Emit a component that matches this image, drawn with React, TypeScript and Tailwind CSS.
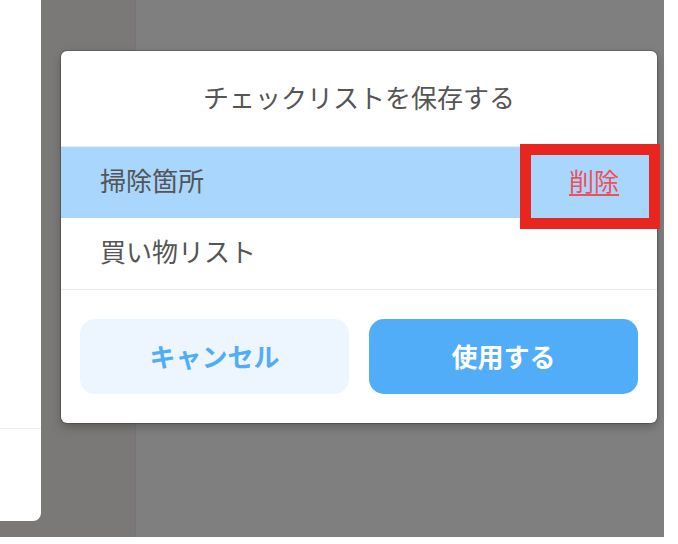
/**
 * Save-checklist dialog over a dimmed screen.
 */

interface ChecklistItem {
  id: number;
  name: string;
  selected: boolean;
}

const items: ChecklistItem[] = [
  { id: 1, name: '掃除箇所', selected: true },
  { id: 2, name: '買い物リスト', selected: false },
];

export default function App() {
  return (
    <div className="relative w-[678px] h-[544px] overflow-hidden bg-white font-['Noto_Sans_CJK_JP','Noto_Sans',sans-serif]">
      {/* Dimmed background screen */}
      <div className="flex w-[664px] h-[537px] bg-[#7f7f7f]">
        <div className="w-[41px] bg-[#7a7977]">
          <div className="flex flex-col h-[521px] bg-white rounded-br-[8px]">
            <div className="h-[428px]"></div>
            <div className="border-t border-[#ececec]"></div>
          </div>
        </div>
        <div className="w-[95px] bg-[#7a7977] border-r border-[#767676]"></div>
        <div className="flex-1"></div>
      </div>

      {/* Dialog */}
      <div className="absolute left-[61px] top-[51px] w-[596px] h-[372px] flex flex-col bg-white rounded-[6px] shadow-[0_0_0_1px_rgba(0,0,0,0.18),0_4px_10px_rgba(0,0,0,0.25)]">
        <div className="h-[96px] flex items-center justify-center pb-[4px] border-b border-[#ececec] text-[26px] leading-none text-[#555]">
          チェックリストを保存する
        </div>
        {items.map(item => (
          <div
            key={item.id}
            className={`h-[71px] flex items-center justify-between pl-[39px] pr-[38px] pb-[5px] text-[26px] leading-none text-[#555] ${item.selected ? 'bg-[#a9d6fc]' : 'bg-white'}`}
          >
            <span>{item.name}</span>
            {item.selected && (
              <span className="text-[25px] text-[#f0505a] underline underline-offset-[3px]">削除</span>
            )}
          </div>
        ))}
        <div className="flex-1 flex items-center gap-[20px] px-[19px] border-t border-[#ececec]">
          <button className="flex-1 h-[75px] pb-[3px] rounded-[15px] bg-[#edf6ff] text-[26px] font-bold text-[#52adf9]">
            キャンセル
          </button>
          <button className="flex-1 h-[75px] pb-[3px] rounded-[15px] bg-[#52adf9] text-[26px] font-bold text-white">
            使用する
          </button>
        </div>
      </div>

      {/* Highlight annotation */}
      <div className="absolute left-[520px] top-[144px] w-[140px] h-[85px] border-[11px] border-[#e8261f]"></div>
    </div>
  );
}
